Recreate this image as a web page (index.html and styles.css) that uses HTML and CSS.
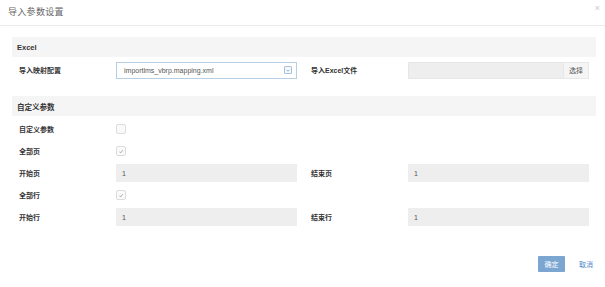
FILE: index.html
```html
<!DOCTYPE html>
<html>
<head>
<meta charset="utf-8">
<link rel="stylesheet" href="styles.css">
</head>
<body>
<div class="modal">
  <div class="modal-header">
    <span class="title">导入参数设置</span>
    <span class="close">×</span>
  </div>
  <div class="modal-body">
    <div class="section-head">Excel</div>
    <div class="row">
      <div class="field">
        <label class="lbl">导入映射配置</label>
        <div class="select">
          <span class="sel-text">importlms_vbrp.mapping.xml</span>
          <span class="sel-arrow"><svg viewBox="0 0 8 8" width="8" height="8"><path d="M2 3 L4 5 L6 3" fill="none" stroke="#6a8fb5" stroke-width="0.9"/></svg></span>
        </div>
      </div>
      <div class="field">
        <label class="lbl">导入Excel文件</label>
        <div class="file">
          <span class="file-box"></span>
          <span class="file-btn">选择</span>
        </div>
      </div>
    </div>

    <div class="section-head second">自定义参数</div>
    <div class="row">
      <div class="field">
        <label class="lbl">自定义参数</label>
        <span class="check"></span>
      </div>
    </div>
    <div class="row">
      <div class="field">
        <label class="lbl">全部页</label>
        <span class="check checked"><svg viewBox="0 0 10 10" width="10" height="10"><path d="M3 5.2 L4.5 6.8 L7.2 3.2" fill="none" stroke="#888" stroke-width="0.8"/></svg></span>
      </div>
    </div>
    <div class="row">
      <div class="field">
        <label class="lbl">开始页</label>
        <div class="input">1</div>
      </div>
      <div class="field">
        <label class="lbl">结束页</label>
        <div class="input">1</div>
      </div>
    </div>
    <div class="row">
      <div class="field">
        <label class="lbl">全部行</label>
        <span class="check checked"><svg viewBox="0 0 10 10" width="10" height="10"><path d="M3 5.2 L4.5 6.8 L7.2 3.2" fill="none" stroke="#888" stroke-width="0.8"/></svg></span>
      </div>
    </div>
    <div class="row">
      <div class="field">
        <label class="lbl">开始行</label>
        <div class="input">1</div>
      </div>
      <div class="field">
        <label class="lbl">结束行</label>
        <div class="input">1</div>
      </div>
    </div>
  </div>
  <div class="modal-footer">
    <span class="btn-ok">确定</span>
    <span class="btn-cancel">取消</span>
  </div>
</div>
</body>
</html>
```

FILE: styles.css
```css
* { box-sizing: border-box; }
html, body {
  margin: 0;
  padding: 0;
  background: #fff;
  font-family: "Liberation Sans", "Noto Sans CJK SC", sans-serif;
  color: #333;
}
.modal {
  width: 605px;
  height: 287px;
  display: flex;
  flex-direction: column;
}
.modal-header {
  height: 26px;
  border-bottom: 1px solid #ebebeb;
  display: flex;
  align-items: center;
  justify-content: space-between;
  padding: 0 5px 2px 8px;
}
.title {
  font-size: 9px;
  color: #666;
  letter-spacing: 0.3px;
}
.close {
  font-size: 9px;
  color: #c8c8c8;
  align-self: flex-start;
  margin-top: 3px;
}
.modal-body {
  padding: 11px 9px 0 12px;
  flex: 1;
}
.section-head {
  height: 20px;
  background: #f5f5f5;
  font-size: 7.5px;
  font-weight: bold;
  color: #333;
  display: flex;
  align-items: center;
  padding-left: 5px;
}
.section-head.second {
  margin-top: 15px;
}
.row {
  display: grid;
  grid-template-columns: 278px 278px;
  column-gap: 14px;
  padding: 0 7px;
  margin-top: 2px;
}
.section-head + .row { margin-top: 2px; }
.row + .row { margin-top: 0; }
.field {
  display: flex;
  align-items: center;
  height: 22px;
}
.lbl {
  width: 97px;
  flex: none;
  font-size: 7px;
  font-weight: bold;
  color: #333;
}
.select {
  width: 181px;
  height: 17px;
  border: 1px solid #b6cfe4;
  display: flex;
  align-items: center;
  justify-content: space-between;
  padding: 0 4px 0 7px;
  background: #fff;
}
.sel-text {
  font-size: 7px;
  color: #555;
}
.sel-arrow {
  width: 8px;
  height: 8px;
  border: 1px solid #a9c3dc;
  border-radius: 1px;
  background: #f4f8fc;
  display: flex;
  align-items: center;
  justify-content: center;
}
.sel-arrow svg { display: block; width: 7px; height: 7px; }
.file {
  width: 181px;
  height: 17px;
  display: flex;
}
.file-box {
  flex: 1;
  background: #eeeeee;
  border: 1px solid #e6e6e6;
  border-right: none;
}
.file-btn {
  width: 26px;
  background: #f5f5f5;
  border: 1px solid #e8e8e8;
  font-size: 7px;
  color: #555;
  display: flex;
  align-items: center;
  justify-content: center;
}
.check {
  width: 10px;
  height: 10px;
  border: 1px solid #dcdcdc;
  border-radius: 2px;
  background: #fafafa;
  display: flex;
  align-items: center;
  justify-content: center;
}
.check svg { display: block; width: 9px; height: 9px; }
.input {
  width: 181px;
  height: 18px;
  background: #eeeeee;
  font-size: 7px;
  color: #555;
  display: flex;
  align-items: center;
  padding-left: 6px;
}
.modal-footer {
  height: 38px;
  display: flex;
  align-items: center;
  justify-content: flex-end;
  padding: 0 12px 8px 0;
}
.btn-ok {
  width: 27px;
  height: 16px;
  background: #7ba6d2;
  color: #fff;
  font-size: 7px;
  border-radius: 1px;
  display: flex;
  align-items: center;
  justify-content: center;
}
.btn-cancel {
  margin-left: 14px;
  font-size: 7px;
  color: #4b87c7;
}
```
